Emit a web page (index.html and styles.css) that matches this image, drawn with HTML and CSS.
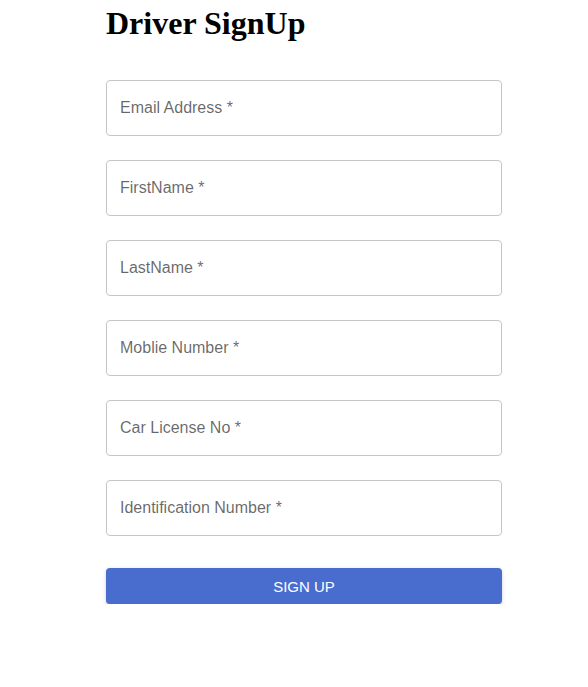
FILE: index.html
```html
<!DOCTYPE html>
<html>
<head>
<meta charset="utf-8">
<link rel="stylesheet" href="styles.css">
</head>
<body>
<main class="wrap">
  <h1 class="title">Driver SignUp</h1>
  <form class="form">
    <div class="field"><span class="label">Email Address *</span></div>
    <div class="field"><span class="label">FirstName *</span></div>
    <div class="field"><span class="label">LastName *</span></div>
    <div class="field"><span class="label">Moblie Number *</span></div>
    <div class="field"><span class="label">Car License No *</span></div>
    <div class="field"><span class="label">Identification Number *</span></div>
    <button type="button" class="btn">Sign Up</button>
  </form>
</main>
</body>
</html>
```
FILE: styles.css
```css
html, body { margin: 0; padding: 0; background: #fff; }
.wrap {
  margin-left: 106px;
  width: 396px;
  padding-top: 5px;
}
.title {
  font-family: "Liberation Serif", "Times New Roman", serif;
  font-weight: bold;
  font-size: 32px;
  line-height: 37px;
  margin: 0;
  color: #000;
}
.form {
  display: flex;
  flex-direction: column;
  gap: 24px;
  margin-top: 38px;
}
.field {
  box-sizing: border-box;
  height: 56px;
  border: 1px solid #c4c4c4;
  border-radius: 4px;
  display: flex;
  align-items: center;
  padding-left: 13px;
  padding-bottom: 2px;
}
.label {
  font-family: "Liberation Sans", Arial, sans-serif;
  font-size: 16px;
  line-height: 23px;
  color: rgba(0,0,0,0.6);
}
.btn {
  margin-top: 8px;
  height: 36px;
  border: none;
  border-radius: 4px;
  background: #496ccf;
  color: #fff;
  font-family: "Liberation Sans", Arial, sans-serif;
  font-size: 15px;
  text-transform: uppercase;
  box-shadow: 0 3px 1px -2px rgba(0,0,0,0.2), 0 2px 2px 0 rgba(0,0,0,0.14), 0 1px 5px 0 rgba(0,0,0,0.12);
  padding: 0;
}
```
